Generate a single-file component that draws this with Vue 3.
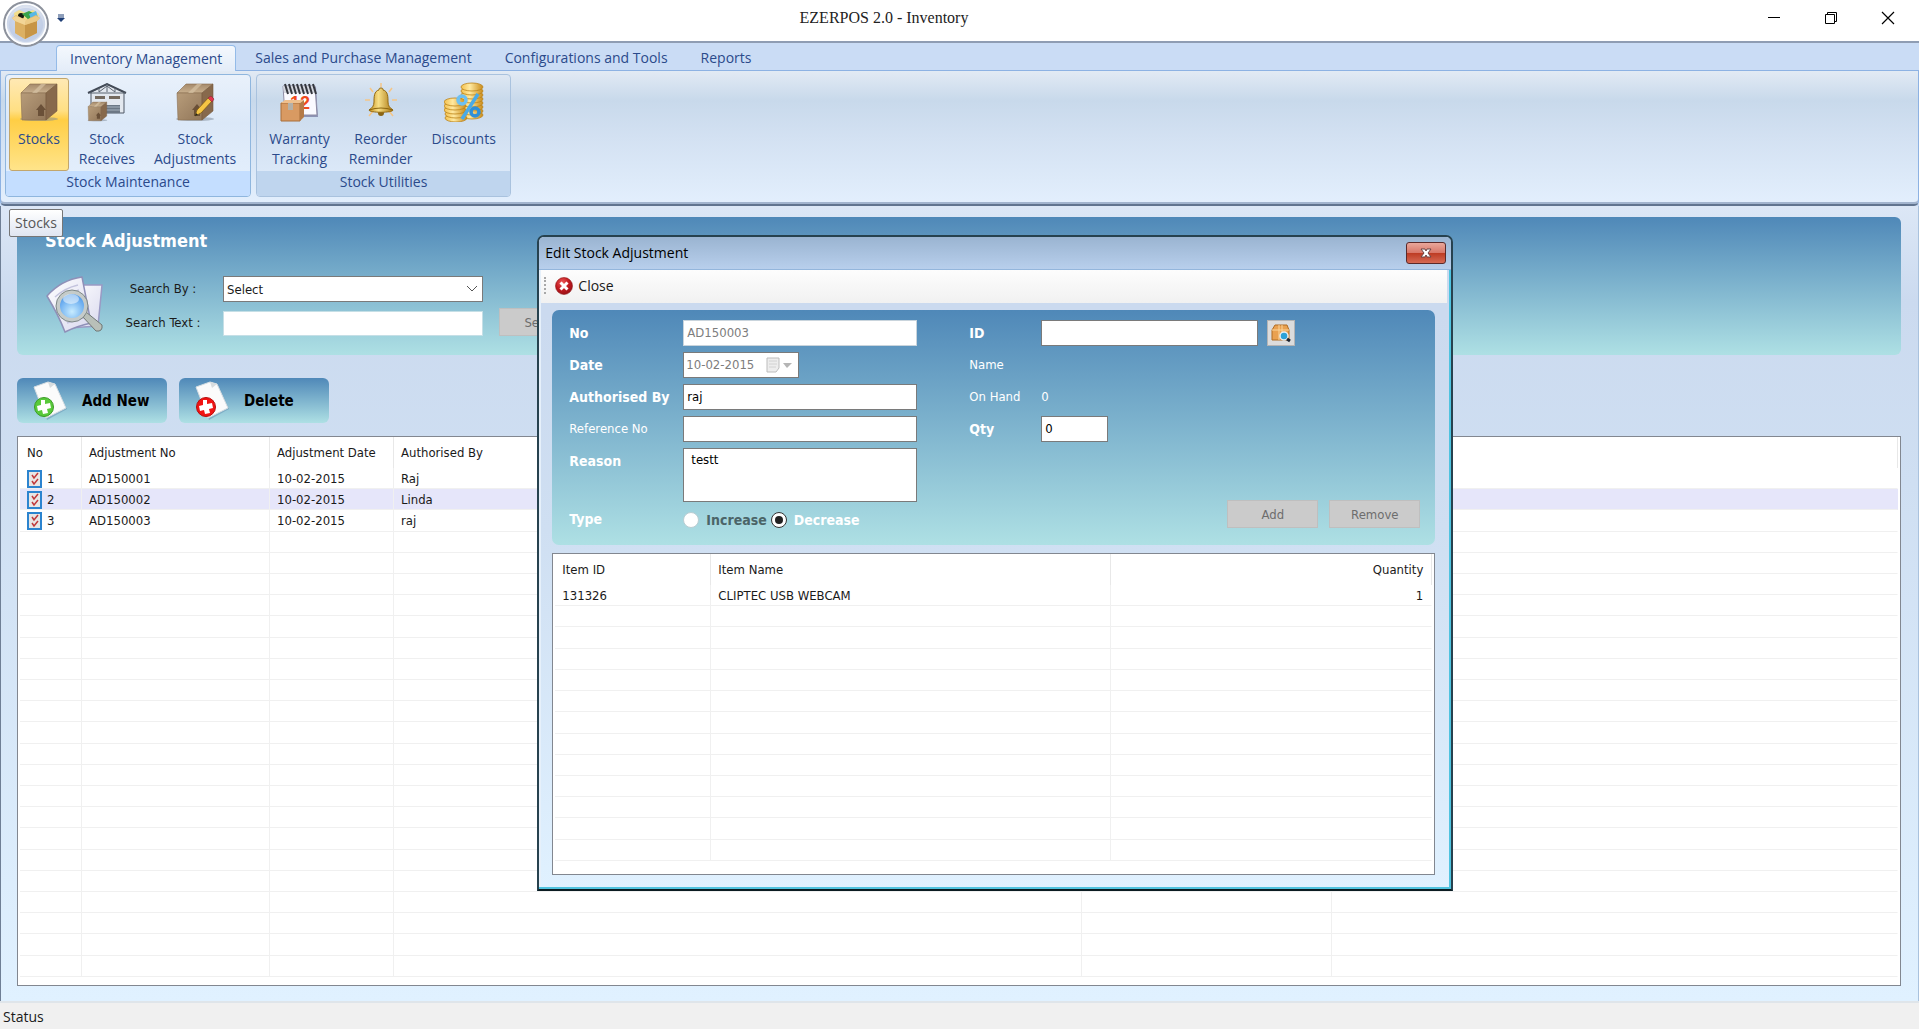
<template>
  <div class="app">
    <!-- shared gradients -->
    <svg class="defs" aria-hidden="true">
      <defs>
        <linearGradient id="boxTop" x1="0" y1="0" x2="0" y2="1">
          <stop offset="0" stop-color="#a58a6c" />
          <stop offset="1" stop-color="#c9b08e" />
        </linearGradient>
        <linearGradient id="boxFront" x1="0" y1="0" x2="1" y2="1">
          <stop offset="0" stop-color="#b79c7a" />
          <stop offset="1" stop-color="#92775a" />
        </linearGradient>
        <linearGradient id="gold" x1="0" y1="0" x2="1" y2="0">
          <stop offset="0" stop-color="#f3c04c" />
          <stop offset="0.4" stop-color="#ffe9a0" />
          <stop offset="1" stop-color="#c98a17" />
        </linearGradient>
        <linearGradient id="bell" x1="0" y1="0" x2="1" y2="0">
          <stop offset="0" stop-color="#c58f1c" />
          <stop offset="0.4" stop-color="#f7df86" />
          <stop offset="1" stop-color="#a8740f" />
        </linearGradient>
        <radialGradient id="lens" cx="0.5" cy="0.7" r="0.7">
          <stop offset="0" stop-color="#c8ecff" />
          <stop offset="1" stop-color="#3f8fe8" />
        </radialGradient>
        <radialGradient id="orb" cx="0.5" cy="0.4" r="0.6">
          <stop offset="0" stop-color="#ffffff" />
          <stop offset="0.7" stop-color="#ccd6e8" />
          <stop offset="1" stop-color="#eef2f8" />
        </radialGradient>
        <radialGradient id="red" cx="0.4" cy="0.3" r="0.8">
          <stop offset="0" stop-color="#ee5a5a" />
          <stop offset="0.5" stop-color="#c21a20" />
          <stop offset="1" stop-color="#8e0d12" />
        </radialGradient>
        <linearGradient id="paper" x1="0" y1="0" x2="1" y2="1">
          <stop offset="0" stop-color="#ffffff" />
          <stop offset="1" stop-color="#d9d9ee" />
        </linearGradient>
        <g id="box">
          <ellipse cx="20" cy="37" rx="19" ry="2" fill="#7b8796" opacity="0.5" />
          <path d="M2 11 11 2H38L27 11Z" fill="url(#boxTop)" stroke="#86694b" stroke-width="0.6" />
          <path d="M2 11H27V38H3Z" fill="url(#boxFront)" stroke="#8a6f52" stroke-width="0.6" />
          <path d="M27 11 38 2V29L27 38Z" fill="#87694c" stroke="#75593d" stroke-width="0.6" />
          <path d="M13 11 22 2H27L18 11Z" fill="#d6c2a4" opacity="0.7" />
          <path d="M17 28 22 22 27 28H25V34H19V28Z" fill="#6a5038" />
        </g>
      </defs>
    </svg>

    <header class="titlebar">
      <button class="orb" type="button" aria-label="Application menu">
        <svg viewBox="0 0 46 46" width="46" height="46">
          <circle cx="23" cy="23" r="22" fill="url(#orb)" stroke="#8d929c" stroke-width="2" />
          <circle cx="23" cy="23" r="20" fill="none" stroke="#fff" stroke-width="1.5" />
          <circle cx="23" cy="24" r="17" fill="#b9c8e4" opacity="0.6" />
          <path d="M11 12 16 9 23 12 30 9 36 13 34 20H12Z" fill="#f3df8c" />
          <circle cx="18" cy="15" r="3" fill="#171a12" />
          <path d="M19 13 26 10 30 12 26 19Z" fill="#3aa34a" />
          <path d="M26 13 33 10 35 16 28 18Z" fill="#58b7e6" />
          <path d="M9 17 13 14 23 19 33 14 37 17 34 20V32L22 38 12 32V20Z" fill="#e4bb6f" />
          <path d="M12 20 22 24V38L12 32Z" fill="#dcb062" />
          <path d="M22 24 34 20V32L22 38Z" fill="#c79546" />
          <path d="M9 17 12 20 22 24 23 19 13 15Z" fill="#f2d596" />
          <path d="M37 17 34 20 22 24 23 19 33 15Z" fill="#ecca85" />
        </svg>
      </button>
      <button class="quick" type="button" aria-label="Customize toolbar">
        <svg viewBox="0 0 8 8" width="8" height="8">
          <path d="M1 1H7M1 3H7" stroke="#1f3f77" />
          <path d="M0 4H8L4 8Z" fill="#1f3f77" />
        </svg>
      </button>
      <h1 class="app-title">EZERPOS 2.0 - Inventory</h1>
      <div class="window-buttons">
        <button type="button" aria-label="Minimize">
          <svg viewBox="0 0 14 14" width="14" height="14"><path d="M1 6.500H13" stroke="#000" /></svg>
        </button>
        <button type="button" aria-label="Restore">
          <svg viewBox="0 0 14 14" width="14" height="14" fill="none" stroke="#000">
            <path d="M1.500 3.500H10.500V12.500H1.500ZM3.500 3V1.500H12.500V10.500H11" />
          </svg>
        </button>
        <button type="button" aria-label="Close window">
          <svg viewBox="0 0 14 14" width="14" height="14"><path d="M1 1 13 13M13 1 1 13" stroke="#000" stroke-width="1.200" /></svg>
        </button>
      </div>
    </header>

    <nav class="tabs">
      <button
        v-for="tab in tabs"
        :key="tab"
        type="button"
        class="tab"
        :class="{ active: tab === activeTab }"
        @click="activeTab = tab"
      >{{ tab }}</button>
    </nav>

    <section class="ribbon">
      <div class="group current">
        <div class="group-buttons">
          <button type="button" class="tool pressed">
            <svg viewBox="0 0 40 40" width="40" height="40"><use href="#box" /></svg>
            <span>Stocks</span>
          </button>
          <button type="button" class="tool">
            <svg viewBox="0 0 40 40" width="40" height="40">
              <path d="M4 10V31H37V10L20 2Z" fill="#e3e8ef" stroke="#4f5966" />
              <path d="M1 11 20 2 39 11" fill="none" stroke="#434b57" stroke-width="2" />
              <path d="M20 1V10M12 6V10M28 6V10M3 11H38M12 10 20 4 28 10" fill="none" stroke="#5b6470" />
              <path d="M8 14H18V17H8ZM22 14H33V17H22Z" fill="#73695e" />
              <path d="M18 23H33V31H18Z" fill="#6d7885" />
              <path d="M18 25H33M18 28H33" stroke="#a7b2be" />
              <use href="#box" transform="translate(0 19) scale(0.52)" />
            </svg>
            <span>Stock<br>Receives</span>
          </button>
          <button type="button" class="tool">
            <svg viewBox="0 0 40 40" width="40" height="40">
              <use href="#box" />
              <path d="M20 34 22 28 34 15 38 18 26 31Z" fill="#f6c544" stroke="#7c5a16" stroke-width="0.8" />
              <path d="M33 16 36 14 39 17 37 20Z" fill="#e2374f" stroke="#8d2636" stroke-width="0.6" />
              <path d="M20 34 21 31 23 33Z" fill="#222" />
            </svg>
            <span>Stock<br>Adjustments</span>
          </button>
        </div>
        <div class="group-name">Stock Maintenance</div>
      </div>

      <div class="group">
        <div class="group-buttons">
          <button type="button" class="tool">
            <svg viewBox="0 0 40 40" width="40" height="40">
              <path d="M4 5H36L38 35H6Z" fill="#8d93b4" />
              <path d="M3 4H35L37 33H5Z" fill="#fafaff" stroke="#8e8ca4" />
              <path d="M3 4H35V11H4Z" fill="#d3d6de" />
              <path d="M5 2 8 12M9 2 12 12M13 2 16 12M17 2 20 12M21 2 24 12M25 2 28 12M29 2 32 12M33 2 36 12" stroke="#34373e" stroke-width="2" />
              <text x="10" y="27" class="cal-text">12</text>
              <path d="M1 21H20V39H1Z" fill="#d99a62" stroke="#a96f3b" />
              <path d="M1 21 5 18H24L20 21Z" fill="#efbf8d" />
              <path d="M20 21 24 18V35L20 39Z" fill="#b47a47" />
              <path d="M8 21H13V28H8Z" fill="#b4b0a8" />
            </svg>
            <span>Warranty<br>Tracking</span>
          </button>
          <button type="button" class="tool">
            <svg viewBox="0 0 40 40" width="40" height="40">
              <path d="M20 1V5M9 6 12 10M31 6 28 10M4 18H9M31 18H36M8 34 12 29M32 34 28 29" stroke="#f5c688" stroke-width="1.500" />
              <ellipse cx="20" cy="31" rx="3" ry="3" fill="#8a6414" />
              <path d="M20 6C22 6 22 7 22 8 27 9 27 15 27 20 27 24 29 26 32 28 32 31 8 31 8 28 11 26 13 24 13 20 13 15 13 9 18 8 18 7 18 6 20 6Z" fill="url(#bell)" stroke="#94690f" />
              <path d="M8 28Q20 24 32 28" fill="none" stroke="#8c650e" />
            </svg>
            <span>Reorder<br>Reminder</span>
          </button>
          <button type="button" class="tool">
            <svg viewBox="0 0 40 40" width="40" height="40">
              <g fill="url(#gold)" stroke="#bd8316" stroke-width="0.8">
                <ellipse cx="28" cy="33" rx="11" ry="4" />
                <ellipse cx="28" cy="29" rx="11" ry="4" />
                <ellipse cx="28" cy="25" rx="11" ry="4" />
                <ellipse cx="28" cy="21" rx="11" ry="4" />
                <ellipse cx="28" cy="17" rx="11" ry="4" />
                <ellipse cx="28" cy="13" rx="11" ry="4" />
                <ellipse cx="28" cy="9" rx="11" ry="4" />
                <ellipse cx="28" cy="5" rx="11" ry="4" />
                <ellipse cx="12" cy="36" rx="11" ry="4" />
                <ellipse cx="12" cy="32" rx="11" ry="4" />
                <ellipse cx="11" cy="28" rx="11" ry="4" />
                <ellipse cx="11" cy="24" rx="11" ry="4" />
                <ellipse cx="11" cy="20" rx="11" ry="4" />
              </g>
              <g fill="none" stroke="#2f8fd8" stroke-width="3.500">
                <circle cx="18" cy="18" r="4" stroke="#6cc0f2" />
                <circle cx="31" cy="30" r="4" />
                <path d="M34 12 18 37" stroke="#4aaae8" />
              </g>
            </svg>
            <span>Discounts</span>
          </button>
        </div>
        <div class="group-name">Stock Utilities</div>
      </div>
    </section>

    <main class="workspace">
      <div class="tooltip" role="tooltip">Stocks</div>

      <section class="search-panel">
        <h2>Stock Adjustment</h2>
        <div class="search-body">
          <svg class="search-icon" viewBox="0 0 58 58" width="58" height="58">
            <path d="M24 9 57 9 53 50 24 52Z" fill="url(#paper)" stroke="#9a9ac4" stroke-width="1.500" />
            <path d="M2 20Q16 4 37 1L46 47Q32 50 20 56Q14 40 2 20Z" fill="url(#paper)" stroke="#8f90b8" stroke-width="1.500" />
            <path d="M10 21Q20 12 33 9M12 26Q22 17 34 14M22 47 41 41" fill="none" stroke="#c4c4de" stroke-width="1.500" />
            <path d="M37 40 41 36 57 49Q58 56 51 55Z" fill="#b9c0b9" stroke="#6f7775" />
            <circle cx="27" cy="30" r="14" fill="url(#lens)" stroke="#c5cbc9" stroke-width="4" />
            <circle cx="27" cy="30" r="16" fill="none" stroke="#7d8786" />
            <ellipse cx="26" cy="23" rx="8" ry="5" fill="#fff" opacity="0.5" />
          </svg>
          <div class="search-fields">
            <label for="searchBy">Search By :</label>
            <span class="select-wrap">
              <select id="searchBy" v-model="searchBy">
                <option>Select</option>
                <option>Adjustment No</option>
                <option>Authorised By</option>
              </select>
              <svg viewBox="0 0 12 8" width="12" height="8"><path d="M1 1 6 6 11 1" fill="none" stroke="#555" /></svg>
            </span>
            <label for="searchText">Search Text :</label>
            <input id="searchText" v-model="searchText" type="text">
          </div>
          <button type="button" class="flat search-button" disabled>Search</button>
        </div>
      </section>

      <div class="actions">
        <button type="button" class="action">
          <svg viewBox="0 0 36 40" width="36" height="40">
            <path d="M1 7 16 1 23 4 34 28 14 39Z" fill="#6d9ab8" opacity="0.6" />
            <path d="M1 6 15 1 22 3 33 27 13 37Z" fill="#fbfbfb" stroke="#d5dde2" />
            <path d="M15 1 17 7 22 3Z" fill="#d8dcde" />
            <circle cx="11" cy="26" r="9.500" fill="#58c93a" stroke="#3b9c26" />
            <path d="M8 19 12 19 12 23 17 22 18 27 14 28 15 32 10 33 9 29 5 30 4 25 8 24Z" fill="#fff" />
          </svg>
          Add New
        </button>
        <button type="button" class="action">
          <svg viewBox="0 0 36 40" width="36" height="40">
            <path d="M1 7 16 1 23 4 34 28 14 39Z" fill="#6d9ab8" opacity="0.6" />
            <path d="M1 6 15 1 22 3 33 27 13 37Z" fill="#fbfbfb" stroke="#d5dde2" />
            <path d="M15 1 17 7 22 3Z" fill="#d8dcde" />
            <circle cx="11" cy="26" r="9.500" fill="#f11313" stroke="#b80d0d" />
            <path d="M8 19 12 19 12 23 17 22 18 27 14 28 15 32 10 33 9 29 5 30 4 25 8 24Z" fill="#fff" />
          </svg>
          Delete
        </button>
      </div>

      <div class="list">
        <table class="grid">
          <colgroup>
            <col class="c-no"><col class="c-adj"><col class="c-date"><col class="c-auth"><col class="c-ref"><col>
          </colgroup>
          <thead>
            <tr>
              <th>No</th>
              <th>Adjustment No</th>
              <th>Adjustment Date</th>
              <th>Authorised By</th>
              <th></th>
              <th></th>
            </tr>
          </thead>
          <tbody>
            <tr v-for="row in adjustments" :key="row.no" :class="{ alt: row.no === 2 }">
              <td>
                <span class="row-no">
                  <svg viewBox="0 0 15 18" width="15" height="18">
                    <path d="M1 1H14V17H1Z" fill="#e9e6e4" stroke="#2c84cf" stroke-width="2" />
                    <path d="M5 5 7 8 11 3M5 11 7 14 11 9" fill="none" stroke="#c0393b" stroke-width="1.500" />
                  </svg>
                  {{ row.no }}
                </span>
              </td>
              <td>{{ row.code }}</td>
              <td>{{ row.date }}</td>
              <td>{{ row.by }}</td>
              <td></td>
              <td></td>
            </tr>
            <tr v-for="n in 21" :key="'e' + n">
              <td v-for="c in 6" :key="c"></td>
            </tr>
          </tbody>
        </table>
      </div>
    </main>

    <footer class="status">Status</footer>

    <div class="dialog" role="dialog" aria-labelledby="dialogTitle">
      <div class="dialog-title">
        <h2 id="dialogTitle">Edit Stock Adjustment</h2>
        <button type="button" class="dialog-x" aria-label="Close dialog">
          <svg viewBox="0 0 14 12" width="14" height="12">
            <path d="M2 2H6L7 4 8 2H12L9 6 12 10H8L7 8 6 10H2L5 6Z" fill="#fff" stroke="#6b4444" />
          </svg>
        </button>
      </div>

      <div class="dialog-toolbar">
        <span class="grip"></span>
        <button type="button" class="close-tool">
          <svg viewBox="0 0 18 18" width="18" height="18">
            <circle cx="9" cy="9" r="8.500" fill="url(#red)" stroke="#8f1b1b" stroke-width="0.6" />
            <path d="M5.500 5.500 12.500 12.500M12.500 5.500 5.500 12.500" stroke="#fff" stroke-width="3" />
          </svg>
          Close
        </button>
      </div>

      <div class="dialog-body">
        <form class="edit-panel" @submit.prevent>
          <div class="fields">
            <label class="required" for="no">No</label>
            <input id="no" v-model="form.no" type="text" class="locked" disabled>
            <label class="required" for="date">Date</label>
            <span class="date-box">
              <input id="date" v-model="form.date" type="text" disabled>
              <svg viewBox="0 0 26 16" width="26" height="16">
                <path d="M1 1H13V11L10 15H1Z" fill="#ededed" stroke="#bdbdbd" />
                <path d="M3 4H11M3 7H11M3 10H10" stroke="#d2d2d2" />
                <path d="M17 6H26L21 11Z" fill="#b5b5b5" />
              </svg>
            </span>
            <label class="required" for="authorised">Authorised By</label>
            <input id="authorised" v-model="form.authorisedBy" type="text">
            <label for="reference">Reference No</label>
            <input id="reference" v-model="form.reference" type="text">
            <label class="required" for="reason">Reason</label>
            <textarea id="reason" v-model="form.reason"></textarea>
            <span class="required type-label">Type</span>
            <div class="radios">
              <input id="increase" v-model="form.type" type="radio" name="type" value="increase">
              <label class="increase" for="increase">Increase</label>
              <input id="decrease" v-model="form.type" type="radio" name="type" value="decrease">
              <label class="decrease" for="decrease">Decrease</label>
            </div>
          </div>

          <div class="item-side">
            <div class="fields item-fields">
              <label class="required" for="itemId">ID</label>
              <div class="id-row">
                <input id="itemId" v-model="item.id" type="text">
                <button type="button" class="lookup" aria-label="Find item">
                  <svg viewBox="0 0 20 20" width="20" height="20">
                    <path d="M1 7 4 2H16L18 7V17H1Z" fill="#e9a150" stroke="#b06c22" />
                    <path d="M1 7H18M8 2V17M11 2V17" stroke="#fbd59a" />
                    <circle cx="13" cy="13" r="4" fill="#2da2d8" stroke="#e8eef2" stroke-width="1.500" />
                    <path d="M16 16 19 18" stroke="#1b2431" stroke-width="3" />
                  </svg>
                </button>
              </div>
              <span>Name</span>
              <span></span>
              <span>On Hand</span>
              <span>{{ item.onHand }}</span>
              <label class="required" for="qty">Qty</label>
              <input id="qty" v-model="item.qty" type="text" class="qty">
            </div>
            <div class="item-buttons">
              <button type="button" class="flat" disabled>Add</button>
              <button type="button" class="flat" disabled>Remove</button>
            </div>
          </div>
        </form>

        <div class="list items">
          <table class="grid">
            <colgroup>
              <col class="c-item"><col class="c-name"><col>
            </colgroup>
            <thead>
              <tr>
                <th>Item ID</th>
                <th>Item Name</th>
                <th class="num">Quantity</th>
              </tr>
            </thead>
            <tbody>
              <tr>
                <td>131326</td>
                <td>CLIPTEC USB WEBCAM</td>
                <td class="num">1</td>
              </tr>
              <tr v-for="n in 12" :key="n">
                <td v-for="c in 3" :key="c"></td>
              </tr>
            </tbody>
          </table>
        </div>
      </div>
    </div>
  </div>
</template>

<script setup>
import { ref, reactive } from 'vue'

const tabs = [
  'Inventory Management',
  'Sales and Purchase Management',
  'Configurations and Tools',
  'Reports'
]
const activeTab = ref(tabs[0])

const searchBy = ref('Select')
const searchText = ref('')

const adjustments = [
  { no: 1, code: 'AD150001', date: '10-02-2015', by: 'Raj' },
  { no: 2, code: 'AD150002', date: '10-02-2015', by: 'Linda' },
  { no: 3, code: 'AD150003', date: '10-02-2015', by: 'raj' }
]

const form = reactive({
  no: 'AD150003',
  date: '10-02-2015',
  authorisedBy: 'raj',
  reference: '',
  reason: 'testt',
  type: 'decrease'
})

const item = reactive({ id: '', onHand: 0, qty: '0' })
</script>

<style>
body {
  margin: 0;
}
</style>

<style scoped>
.app {
  position: relative;
  display: flex;
  flex-direction: column;
  min-height: 100vh;
  background: #cadcf5;
  color: #1a1a1a;
  font-family: "DejaVu Sans Condensed", "Noto Sans", sans-serif;
  font-size: 13px;
}

.app * {
  box-sizing: border-box;
}

button, input, select, textarea {
  margin: 0;
  padding: 0;
  border: 0;
  background: none;
  color: inherit;
  font: inherit;
  outline: none;
}

h1, h2 {
  margin: 0;
  font-weight: normal;
}

svg {
  display: block;
  flex: none;
}

.defs {
  position: absolute;
  width: 0;
  height: 0;
}

/* title bar */
.titlebar {
  position: relative;
  display: grid;
  grid-template-columns: 65px 1fr 216px;
  align-items: center;
  height: 43px;
  padding-bottom: 5px;
  background: #fff;
  border-bottom: 2px solid #8f9db3;
}

.orb {
  position: absolute;
  top: 1px;
  left: 3px;
}

.quick {
  justify-self: end;
}

.app-title {
  color: #222;
  font-family: "Liberation Serif", serif;
  font-size: 16px;
  text-align: center;
}

.window-buttons {
  display: flex;
  justify-content: flex-end;
  gap: 43px;
  padding-right: 24px;
}

/* tabs and ribbon */
.tabs {
  display: flex;
  gap: 5px;
  height: 28px;
  padding: 2px 0 0 56px;
  border-bottom: 1px solid #8db2e3;
}

.tab {
  height: 26px;
  padding: 0 13px 2px;
  border: 1px solid transparent;
  border-bottom: 0;
  color: #2b4a8b;
  font-family: "Open Sans", "Noto Sans", sans-serif;
  font-size: 14px;
}

.tab.active {
  height: 27px;
  background: linear-gradient(#f4f8fd, #e3ecf8);
  border-color: #94bbe8;
  border-radius: 4px 4px 0 0;
}

.ribbon {
  display: flex;
  gap: 5px;
  height: 135px;
  padding: 3px 4px;
  background: linear-gradient(#e2eaf4, #c8d9eb 22%, #d3e1f2 50%, #e3effd);
  border: 1px solid #8db2e3;
  border-top: 0;
  border-bottom: 2px solid #61748f;
  border-radius: 0 0 5px 5px;
  box-shadow: inset 0 -2px 0 #a2b4ce;
  color: #2b4a8b;
  font-family: "Open Sans", "Noto Sans", sans-serif;
  font-size: 14px;
  line-height: 20px;
}

.group {
  display: flex;
  flex-direction: column;
  height: 123px;
  border: 1px solid #a9c2de;
  border-radius: 4px;
  overflow: hidden;
}

.group.current {
  background: linear-gradient(#e9f1fb, #dbe8f8 40%, #e6f1fd);
  border-color: #8fb6de;
}

.group-buttons {
  display: flex;
  flex: 1;
  gap: 1px;
  padding: 3px 5px 0 3px;
}

.group-name {
  height: 25px;
  line-height: 22px;
  background: #bfd5ee;
  text-align: center;
}

.current .group-name {
  background: #c4deff;
}

.tool {
  display: flex;
  flex-direction: column;
  align-items: center;
  gap: 7px;
  height: 93px;
  padding: 3px 8px 0;
  border: 1px solid transparent;
}

.tool.pressed {
  background: linear-gradient(#ffe9b4, #ffdf83 35%, #ffce45 45%, #ffe48a);
  border-color: #c2a66c;
  border-radius: 3px;
}

.cal-text {
  fill: #f04a1c;
  font: bold 18px "Liberation Sans", sans-serif;
}

/* workspace */
.workspace {
  position: relative;
  display: flex;
  flex: 1;
  flex-direction: column;
  padding: 11px 17px 15px 16px;
  background: linear-gradient(#dce7f6, #cbdaef 12%, #cfdff2 35%, #e0f1ff);
  border-left: 1px solid #6f7f95;
  border-right: 1px solid #a9c2de;
}

.tooltip {
  position: absolute;
  top: 3px;
  left: 8px;
  z-index: 1;
  width: 54px;
  height: 28px;
  line-height: 26px;
  background: linear-gradient(#fff, #dfe5f1);
  border: 1px solid #767676;
  border-radius: 2px;
  color: #575757;
  font-family: "Open Sans", "Noto Sans", sans-serif;
  font-size: 14px;
  text-align: center;
}

.search-panel {
  height: 138px;
  padding: 11px 28px;
  background: linear-gradient(#4f88b8, #aee0e4);
  border-radius: 6px;
}

.search-panel h2 {
  color: #fff;
  font-size: 18px;
  font-weight: bold;
  line-height: 26px;
}

.search-body {
  display: flex;
  align-items: flex-start;
  padding-top: 22px;
}

.search-fields {
  display: grid;
  grid-template-columns: 120px 260px;
  gap: 8px 0;
  align-items: center;
  line-height: 26px;
}

.search-fields label {
  text-align: center;
}

.search-fields input {
  height: 25px;
  padding: 0 3px;
  background: #fff;
  border: 1px solid #c5dfe6;
}

.select-wrap {
  display: grid;
  align-items: center;
}

.select-wrap > * {
  grid-area: 1 / 1;
}

.select-wrap select {
  height: 26px;
  padding: 0 3px;
  background: #fff;
  border: 1px solid #7a7a7a;
  appearance: none;
}

.select-wrap svg {
  justify-self: end;
  margin-right: 5px;
  pointer-events: none;
}

.flat {
  width: 91px;
  height: 28px;
  background: #cbcbcb;
  border: 1px solid #bfbfbf;
  color: #6d6d6d;
}

.search-button {
  margin: 32px 0 0 16px;
}

.actions {
  display: flex;
  gap: 12px;
  padding: 23px 0 13px;
}

.action {
  display: flex;
  align-items: center;
  gap: 13px;
  width: 150px;
  height: 45px;
  padding-left: 16px;
  background: linear-gradient(#4f88b8, #aee0e4);
  border-radius: 6px;
  color: #000;
  font-size: 15px;
  font-weight: bold;
}

.list {
  display: flex;
  flex: 1;
  padding: 0 2px 8px;
  background: #fff;
  border: 1px solid #828790;
}

.grid {
  flex: 1;
  border-collapse: separate;
  border-spacing: 0;
  table-layout: fixed;
}

.grid th {
  height: 31px;
  padding: 0 7px;
  border-right: 1px solid #e8e8e8;
  font-weight: normal;
  text-align: left;
}

.grid td {
  height: 21px;
  padding: 1px 7px 0;
  border-right: 1px solid #f0f0f0;
  border-bottom: 1px solid #f0f0f0;
  line-height: 18px;
}

.grid td:last-child {
  border-right-color: transparent;
}

.grid .alt td {
  background: #e6e6fa;
}

.grid .num {
  padding-right: 8px;
  text-align: right;
}

.row-no {
  display: flex;
  align-items: center;
  gap: 5px;
}

.c-no { width: 62px; }
.c-adj { width: 188px; }
.c-date { width: 124px; }
.c-auth { width: 688px; }
.c-ref { width: 250px; }
.c-item { width: 156px; }
.c-name { width: 400px; }

.status {
  height: 28px;
  padding: 1px 3px 0;
  background: #f0f0f0;
  border-top: 2px solid #dfe5ea;
  font-family: "Open Sans", "Noto Sans", sans-serif;
  font-size: 14px;
  line-height: 26px;
}

/* edit dialog */
.dialog {
  position: absolute;
  top: 235px;
  left: 28%;
  z-index: 2;
  display: flex;
  flex-direction: column;
  width: 916px;
  height: 656px;
  background: linear-gradient(#cbdaef 12%, #cfdff2 45%, #e0f1ff);
  border: 2px solid #27424f;
  border-bottom-color: #0c1c22;
  border-radius: 7px 7px 0 0;
  box-shadow: inset -2px -2px 0 #4fc3df, inset 2px 2px 0 #e6f0fa;
}

.dialog-title {
  display: flex;
  align-items: center;
  justify-content: space-between;
  height: 33px;
  padding: 0 5px 1px 6px;
  background: linear-gradient(#9ab4d1, #b8cfec);
  border-bottom: 1px solid #94b6dc;
  border-radius: 5px 5px 0 0;
}

.dialog-title h2 {
  color: #000;
  font-family: "Open Sans", "Noto Sans", sans-serif;
  font-size: 14px;
}

.dialog-x {
  display: grid;
  place-items: center;
  width: 40px;
  height: 22px;
  background: linear-gradient(#e9a79b, #d9786a 48%, #bd3a22 50%, #d66a55);
  border: 1px solid #5b2a2a;
  border-radius: 3px;
}

.dialog-toolbar {
  display: flex;
  align-items: center;
  gap: 9px;
  height: 33px;
  margin: 0 4px 0 2px;
  padding: 0 0 2px 3px;
  background: linear-gradient(#fdfdfd, #f1f1f1);
}

.grip {
  height: 17px;
  border-left: 2px dotted #a8a8a8;
}

.close-tool {
  display: flex;
  align-items: center;
  gap: 5px;
  font-family: "Open Sans", "Noto Sans", sans-serif;
  font-size: 14px;
}

.dialog-body {
  display: flex;
  flex: 1;
  flex-direction: column;
  gap: 8px;
  padding: 7px 16px 14px 13px;
}

.edit-panel {
  display: flex;
  justify-content: space-between;
  padding: 10px 15px 13px 17px;
  background: linear-gradient(#4f88b8, #aee0e4);
  border-radius: 7px;
  color: #fff;
}

.fields {
  display: grid;
  grid-template-columns: 114px 234px;
  gap: 6px 0;
  align-content: start;
  line-height: 26px;
}

.fields > .required {
  font-size: 14px;
  font-weight: bold;
}

.fields > .type-label {
  line-height: 22px;
}

.fields input[type="text"],
.fields textarea {
  height: 26px;
  padding: 0 3px;
  background: #fff;
  border: 1px solid #7a7a7a;
  color: #000;
}

.fields input.locked {
  border-color: #c9d4dc;
  color: #7d7d7d;
}

.fields textarea {
  height: 54px;
  padding: 2px 7px;
  line-height: 18px;
  resize: none;
}

.date-box {
  display: flex;
  align-items: center;
  width: 116px;
  height: 26px;
  padding-right: 6px;
  background: #fff;
  border: 1px solid #7a7a7a;
}

.fields .date-box input {
  flex: 1;
  min-width: 0;
  height: 24px;
  padding: 0 2px;
  border: 0;
  color: #7d7d7d;
}

.radios {
  display: flex;
  align-items: center;
  height: 24px;
  font-size: 14px;
  font-weight: bold;
}

.radios input {
  display: grid;
  place-items: center;
  width: 16px;
  height: 16px;
  background: #fff;
  border: 1px solid #b9cdd2;
  border-radius: 50%;
  appearance: none;
}

.radios input:checked {
  border: 1px solid #333;
}

.radios input:checked::after {
  content: "";
  width: 8px;
  height: 8px;
  background: #222;
  border-radius: 50%;
}

.radios label {
  padding: 0 4px 0 7px;
}

.radios .increase {
  color: #4b6468;
}

.item-side {
  display: flex;
  flex-direction: column;
  justify-content: space-between;
  width: 451px;
  padding-bottom: 4px;
}

.item-fields {
  grid-template-columns: 72px 1fr;
}

.id-row {
  display: flex;
  gap: 9px;
}

.id-row input {
  width: 217px;
}

.lookup {
  display: grid;
  place-items: center;
  width: 28px;
  height: 26px;
  background: #dcdcdc;
  border: 1px solid #b4b4b4;
}

.fields input.qty {
  width: 67px;
}

.item-buttons {
  display: flex;
  justify-content: flex-end;
  gap: 11px;
}

.items {
  padding-bottom: 13px;
}
</style>
